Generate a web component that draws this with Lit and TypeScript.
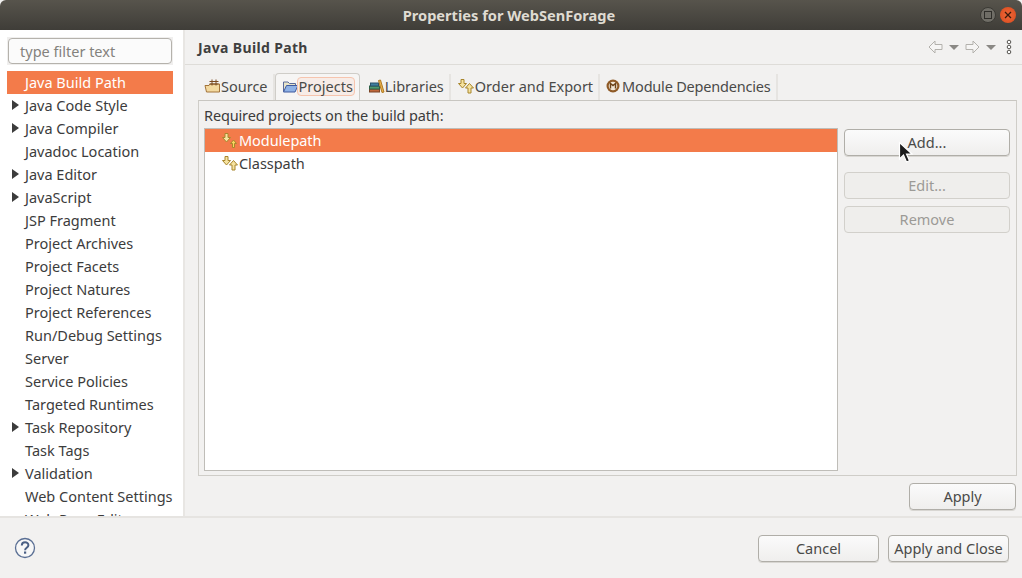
import { LitElement, html, css, svg } from "lit";
import { customElement } from "lit/decorators.js";

const treeItems: [string, boolean, boolean?][] = [
  ["Java Build Path", false, true],
  ["Java Code Style", true],
  ["Java Compiler", true],
  ["Javadoc Location", false],
  ["Java Editor", true],
  ["JavaScript", true],
  ["JSP Fragment", false],
  ["Project Archives", false],
  ["Project Facets", false],
  ["Project Natures", false],
  ["Project References", false],
  ["Run/Debug Settings", false],
  ["Server", false],
  ["Service Policies", false],
  ["Targeted Runtimes", false],
  ["Task Repository", true],
  ["Task Tags", false],
  ["Validation", true],
  ["Web Content Settings", false],
  ["Web Page Editor", false],
];

// yellow down/up arrows used for the order and classpath icons
const orderIcon = (small = false) => svg`
  <svg class="ico" width="18" height="16" viewBox="0 0 18 16">
    <path d="M4 1.500h3v4h2.500L5.500 10 1.500 5.500H4z" fill="#f6e3a0" stroke="#a8862c"/>
    ${small
      ? svg`<path d="M12.500 8l3 3.500h-2V15.500h-2v-4h-2z" fill="#f6d860" stroke="#a8862c"/>`
      : svg`<path d="M12.500 5.500l4 4.500H14v5h-3v-5H8.500z" fill="#f6e3a0" stroke="#a8862c"/>`}
  </svg>`;

const sourceIcon = svg`
  <svg class="ico" width="17" height="16" viewBox="0 0 17 16">
    <path d="M1 7.500h4l1-1.500h9.500v8H2.500z" fill="#f3d9a0" stroke="#a3743a"/>
    <path d="M8 1.500v6M12 1.500v6M5.500 3.500h9M5.500 6h9" stroke="#7a4a20" fill="none"/>
  </svg>`;

const projectsIcon = svg`
  <svg class="ico" width="17" height="16" viewBox="0 0 17 16">
    <path d="M1.500 12.500V3h4.500l1.500 1.500h6v2" fill="#e8e4c8" stroke="#5a6a9a"/>
    <path d="M1.500 13l3-6.500h11.500l-3 6.500z" fill="#8fb2e6" stroke="#3f5a9e"/>
  </svg>`;

const librariesIcon = svg`
  <svg class="ico" width="17" height="16" viewBox="0 0 17 16">
    <rect x="1.500" y="11" width="10" height="3" fill="#c0663a" stroke="#7a4526"/>
    <rect x="1.500" y="8" width="10" height="3" fill="#4f9a6e" stroke="#2e6048"/>
    <rect x="2.500" y="5" width="8" height="3" fill="#3f7f9f" stroke="#2a5068"/>
    <path d="M10.500 2.500l2-.5 3.500 12-2 .5z" fill="#eab04a" stroke="#b07a24"/>
  </svg>`;

const moduleIcon = svg`
  <svg class="ico" width="14" height="14" viewBox="0 0 14 14">
    <circle cx="7" cy="7" r="6.500" fill="#8f5a26"/>
    <circle cx="7" cy="7" r="4.300" fill="#f1e6d6"/>
    <path d="M4.500 9.500v-5l2.500 2 2.500-2v5" fill="none" stroke="#6b4218" stroke-width="1.400"/>
  </svg>`;

@customElement("app-root")
export class AppRoot extends LitElement {
  static styles = css`
    :host {
      display: flex;
      flex-direction: column;
      width: 1022px;
      height: 578px;
      overflow: hidden;
      background: #f2f1f0;
      color: #3c3c3c;
      font-family: "Noto Sans", "Open Sans", sans-serif;
      font-size: 14.5px;
      position: relative;
    }
    .titlebar {
      height: 30px;
      flex: none;
      display: flex;
      align-items: center;
      justify-content: center;
      position: relative;
      box-sizing: border-box;
      padding-right: 4px;
      border-radius: 6px 6px 0 0;
      background: linear-gradient(#57544c, #3f3d38);
      color: #dfdbd2;
      font-weight: 700;
      font-size: 14.6px;
    }
    .winbtns {
      position: absolute;
      right: 6px;
      top: 7px;
      display: flex;
      gap: 4px;
    }
    .winbtn {
      width: 16px;
      height: 16px;
      border-radius: 50%;
      display: flex;
      align-items: center;
      justify-content: center;
    }
    .winbtn.max {
      background: #6f6d66;
      border: 1px solid #3a3934;
      box-sizing: border-box;
    }
    .winbtn.close {
      background: radial-gradient(#f0693a, #d8491c);
    }
    .main {
      flex: 1;
      min-height: 0;
      display: flex;
    }
    .side {
      width: 183px;
      flex: none;
      background: #ffffff;
      border-right: 2px solid #e8e6e3;
      display: flex;
      flex-direction: column;
      overflow: hidden;
    }
    .filter {
      margin: 7px 10px 6px 7px;
      height: 28px;
      padding: 1px;
      background: #f0efee;
      box-sizing: border-box;
      flex: none;
      display: flex;
    }
    .filter div {
      flex: 1;
      border: 1px solid #b5b2ac;
      border-radius: 4px;
      background: #fbfbfb;
      color: #84827d;
      padding-left: 11px;
      line-height: 24px;
    }
    .tree {
      margin-right: 10px;
      margin-left: 7px;
    }
    .row {
      height: 23px;
      line-height: 23px;
      padding-left: 18px;
      position: relative;
      white-space: nowrap;
    }
    .row.sel {
      background: #f37b4a;
      color: #fff;
    }
    .arrow {
      position: absolute;
      left: 5px;
      top: 6px;
      width: 0;
      height: 0;
      border-left: 7px solid #3c3c3c;
      border-top: 5.5px solid transparent;
      border-bottom: 5.5px solid transparent;
    }
    .content {
      flex: 1;
      min-width: 0;
      display: flex;
      flex-direction: column;
    }
    .head {
      height: 35px;
      flex: none;
      box-sizing: border-box;
      border-bottom: 1px solid #dedcd8;
      display: flex;
      align-items: center;
      justify-content: space-between;
      padding: 0 9px 0 13px;
    }
    .head h1 {
      margin: 0;
      font-size: 14px;
      font-weight: 700;
      letter-spacing: 0.35px;
      color: #3f3f3f;
    }
    .nav {
      display: flex;
      align-items: center;
      gap: 6px;
    }
    .drop {
      width: 0;
      height: 0;
      border-top: 5px solid #8a8884;
      border-left: 5px solid transparent;
      border-right: 5px solid transparent;
    }
    .dots {
      margin-left: 3px;
    }
    .tabs {
      margin: 8px 5px 0 13px;
      height: 27px;
      flex: none;
      display: flex;
      align-items: flex-end;
      box-sizing: border-box;
    }
    .tab {
      height: 26px;
      box-sizing: border-box;
      display: flex;
      align-items: center;
      padding: 0 5px 2px 6px;
      border-right: 2px solid #e6e4e1;
      white-space: nowrap;
      color: #4a4a48;
    }
    .tab.active {
      height: 27px;
      background: #f6f5f4;
      border: 1px solid #cfcdc8;
      border-bottom: none;
      border-radius: 4px 4px 0 0;
      padding: 0 4px 1px 6px;
      margin: 0 2px 0 0;
    }
    .tab.active span {
      border: 1px solid #f6c4ae;
      background: #f7ece7;
      border-radius: 4px;
      line-height: 17px;
      padding: 0 1px;
      margin-left: -2px;
    }
    .tab .ico {
      flex: none;
    }
    .tab.module {
      padding-left: 6px;
      letter-spacing: -0.2px;
    }
    .tab.module .ico {
      margin-right: 2px;
    }
    .folder {
      flex: none;
      height: 376px;
      margin: 0 5px 0 13px;
      box-sizing: border-box;
      border: 1px solid #cfcdc8;
      border-top: 1px solid #c8c6c1;
      padding: 5px 5px 4px;
      display: flex;
      flex-direction: column;
    }
    .folder-label {
      height: 22px;
      line-height: 18px;
      flex: none;
      letter-spacing: -0.14px;
    }
    .folder-body {
      flex: 1;
      min-height: 0;
      display: flex;
      gap: 6px;
    }
    .list {
      width: 634px;
      flex: none;
      background: #fff;
      border: 1px solid #bfbdb8;
      box-sizing: border-box;
    }
    .lrow {
      height: 23px;
      box-sizing: border-box;
      display: flex;
      align-items: center;
      padding: 0 0 2px 16px;
      letter-spacing: -0.05px;
    }
    .lrow.sel {
      background: #f37b4a;
      color: #fff;
    }
    .btns {
      width: 166px;
      flex: none;
      display: flex;
      flex-direction: column;
      padding-top: 1px;
    }
    .btn {
      box-sizing: border-box;
      height: 27px;
      border: 1px solid #b0aea8;
      border-radius: 4px;
      background: linear-gradient(#fbfbfb, #efeeed);
      box-shadow: 0 1px 0 #d8d6d2;
      display: flex;
      align-items: center;
      justify-content: center;
      color: #4a4a48;
      flex: none;
    }
    .btns .btn,
    .apply-row .btn {
      padding-bottom: 2px;
    }
    .btn.off {
      background: #efeeec;
      border-color: #d2d0cb;
      color: #9c9a96;
      box-shadow: none;
    }
    .gap-l {
      margin-top: 16px;
    }
    .gap-s {
      margin-top: 7px;
    }
    .apply-row {
      flex: none;
      display: flex;
      justify-content: flex-end;
      margin: 7px 6px 0 0;
    }
    .apply-row .btn {
      width: 107px;
    }
    .footer {
      height: 62px;
      flex: none;
      box-sizing: border-box;
      border-top: 2px solid #e6e4e1;
      display: flex;
      align-items: center;
      justify-content: space-between;
      padding: 0 13px 0 14px;
      background: #f2f1f0;
    }
    .actions {
      display: flex;
      gap: 9px;
    }
    .actions .btn {
      width: 121px;
      white-space: nowrap;
    }
    .cursor {
      position: absolute;
      left: 898px;
      top: 141px;
    }
  `;

  render() {
    return html`
      <div class="titlebar">
        Properties for WebSenForage
        <div class="winbtns">
          <div class="winbtn max">
            <svg width="8" height="8" viewBox="0 0 8 8"><rect x="0.5" y="0.5" width="7" height="7" fill="none" stroke="#2f2e2a"/></svg>
          </div>
          <div class="winbtn close">
            <svg width="8" height="8" viewBox="0 0 8 8"><path d="M1 1l6 6M7 1l-6 6" stroke="#3a1a0c" stroke-width="1.3"/></svg>
          </div>
        </div>
      </div>
      <div class="main">
        <div class="side">
          <div class="filter"><div>type filter text</div></div>
          <div class="tree">
            ${treeItems.map(
              ([name, arrow, sel]) => html`
                <div class="row ${sel ? "sel" : ""}">
                  ${arrow ? html`<i class="arrow"></i>` : ""}${name}
                </div>
              `
            )}
          </div>
        </div>
        <div class="content">
          <div class="head">
            <h1>Java Build Path</h1>
            <div class="nav">
              <svg width="15" height="14" viewBox="0 0 15 14"><path d="M7 1L1 7l6 6V9.500h7v-5H7z" fill="#f6f5f4" stroke="#b3b1ac"/></svg>
              <i class="drop"></i>
              <svg width="15" height="14" viewBox="0 0 15 14"><path d="M8 1l6 6-6 6V9.500H1v-5h7z" fill="#f6f5f4" stroke="#b3b1ac"/></svg>
              <i class="drop"></i>
              <svg class="dots" width="8" height="16" viewBox="0 0 8 16">
                <circle cx="4" cy="3" r="1.8" fill="#fff" stroke="#55534f"/>
                <circle cx="4" cy="8" r="1.8" fill="#fff" stroke="#55534f"/>
                <circle cx="4" cy="13" r="1.8" fill="#fff" stroke="#55534f"/>
              </svg>
            </div>
          </div>
          <div class="tabs">
            <div class="tab">${sourceIcon}Source</div>
            <div class="tab active">${projectsIcon}<span>Projects</span></div>
            <div class="tab">${librariesIcon}Libraries</div>
            <div class="tab">${orderIcon()}Order and Export</div>
            <div class="tab module">${moduleIcon}Module Dependencies</div>
          </div>
          <div class="folder">
            <div class="folder-label">Required projects on the build path:</div>
            <div class="folder-body">
              <div class="list">
                <div class="lrow sel">${orderIcon(true)}Modulepath</div>
                <div class="lrow">${orderIcon()}Classpath</div>
              </div>
              <div class="btns">
                <div class="btn">Add...</div>
                <div class="btn off gap-l">Edit...</div>
                <div class="btn off gap-s">Remove</div>
              </div>
            </div>
          </div>
          <div class="apply-row"><div class="btn">Apply</div></div>
        </div>
      </div>
      <div class="footer">
        <svg width="22" height="22" viewBox="0 0 22 22">
          <circle cx="11" cy="11" r="9.500" fill="#f7f7f7" stroke="#5a6f94" stroke-width="1.3"/>
          <path d="M7.800 8.500c0-4.200 6.600-4.200 6.600-.3 0 2.600-3.300 2.600-3.300 5" fill="none" stroke="#4a5f84" stroke-width="2"/>
          <rect x="10" y="14.500" width="2.200" height="2.200" fill="#4a5f84"/>
        </svg>
        <div class="actions">
          <div class="btn">Cancel</div>
          <div class="btn">Apply and Close</div>
        </div>
      </div>
      <svg class="cursor" width="15" height="23" viewBox="0 0 15 23">
        <path d="M1.500 1.500v16.500l4-4 3 7 3-1.300-3-6.700h5.500z" fill="#1c1c1c" stroke="#fff" stroke-width="1.2"/>
      </svg>
    `;
  }
}
